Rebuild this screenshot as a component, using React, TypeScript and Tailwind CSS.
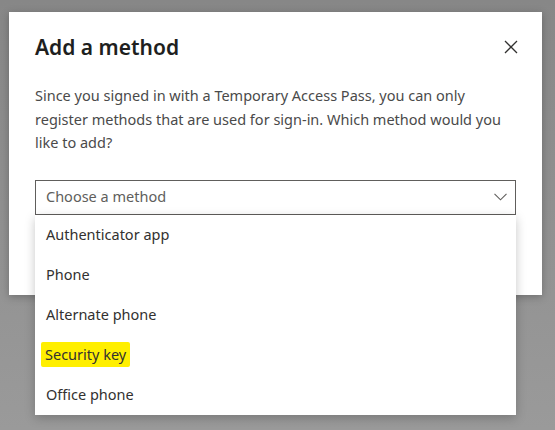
import { useState } from 'react'

const methods = ['Authenticator app', 'Phone', 'Alternate phone', 'Security key', 'Office phone']

const CloseIcon = () => (
  <svg width="14" height="14" viewBox="0 0 14 14" fill="none">
    <path d="M1 1L13 13M13 1L1 13" stroke="#323130" strokeWidth="1.3" />
  </svg>
)

const Chevron = () => (
  <svg width="13" height="8" viewBox="0 0 13 8" fill="none">
    <path d="M0.5 0.8L6.5 6.8L12.5 0.8" stroke="#605e5c" strokeWidth="1.1" />
  </svg>
)

const App = () => {
  const [open] = useState(true)

  return (
    <div
      className="w-[555px] h-[430px] overflow-hidden bg-gradient-to-b from-[#878787] to-[#9a9a9a] pl-[9px] pt-[12px]"
      style={{ fontFamily: '"Noto Sans", "Open Sans", Arial, sans-serif' }}
    >
      <div className="w-[533px] h-[283px] bg-white shadow-[0_2px_8px_rgba(0,0,0,0.25)] px-[26px] pt-[20px]">
        {/* Header */}
        <div className="flex items-center justify-between h-[30px]">
          <h2 className="text-[21px] font-semibold text-[#201f1e] leading-[30px]">Add a method</h2>
          <button className="mr-[-5px] flex items-center justify-center w-[20px] h-[20px]">
            <CloseIcon />
          </button>
        </div>

        <p className="mt-[22px] text-[14.5px] leading-[23.5px] text-[#4a4a4a] pr-[10px]">
          Since you signed in with a Temporary Access Pass, you can only register methods that are used for
          sign-in. Which method would you like to add?
        </p>

        {/* Select */}
        <div className="relative mt-[25px]">
          <div className="h-[35px] border border-[#605e5c] flex items-center justify-between pl-[10px] pr-[8px]">
            <span className="text-[14.5px] text-[#605e5c]">Choose a method</span>
            <Chevron />
          </div>

          {open && (
            <div className="absolute left-0 right-0 top-[35px] bg-white shadow-[0_3px_10px_rgba(0,0,0,0.22)] z-10">
              {methods.map((m) => (
                <div key={m} className="h-[40px] flex items-center pl-[11px]">
                  <span
                    className={
                      m === 'Security key'
                        ? 'text-[14.5px] text-[#323130] bg-[#ffef00] px-[4px] ml-[-5px] py-[2px] rounded-[2px]'
                        : 'text-[14.5px] text-[#323130]'
                    }
                  >
                    {m}
                  </span>
                </div>
              ))}
            </div>
          )}
        </div>
      </div>
    </div>
  )
}

export default App
